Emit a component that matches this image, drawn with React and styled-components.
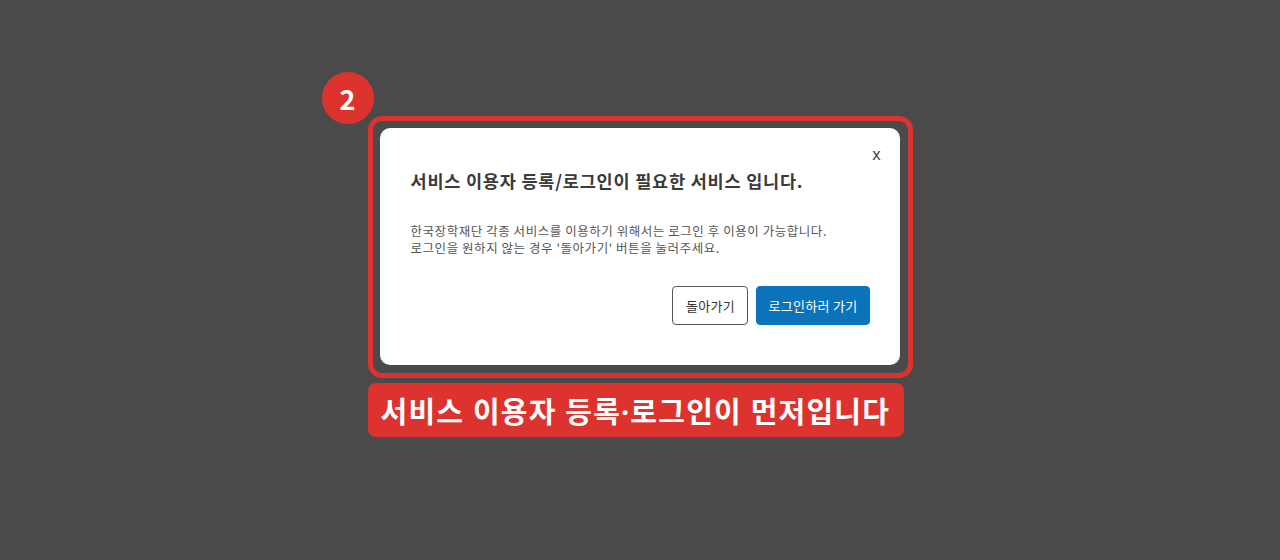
import React from 'react'
import styled, { createGlobalStyle } from 'styled-components'

const GlobalStyle = createGlobalStyle`
  html, body {
    margin: 0;
    padding: 0;
    background: #4a4a4a;
  }
  body {
    font-family: 'Noto Sans CJK KR', 'Noto Sans', sans-serif;
  }
`

const Page = styled.div`
  height: 560px;
  display: flex;
  flex-direction: column;
  align-items: center;
  padding-top: 116px;
  box-sizing: border-box;
`

const Group = styled.div`
  display: flex;
  flex-direction: column;
  align-items: flex-start;
  gap: 5px;
`

const Frame = styled.div`
  position: relative;
  border: 5px solid #dd332f;
  border-radius: 14px;
  padding: 7px 8px 8px 7px;
`

const StepBadge = styled.div`
  position: absolute;
  left: -51px;
  top: -49px;
  width: 52px;
  height: 52px;
  border-radius: 50%;
  background: #dd332f;
  color: #fff;
  font-size: 27px;
  font-weight: 700;
  display: flex;
  align-items: center;
  justify-content: center;
  line-height: 1;
`

const Modal = styled.div`
  position: relative;
  width: 520px;
  height: 237px;
  box-sizing: border-box;
  background: #fff;
  border-radius: 10px;
  padding: 41px 30px 0 31px;
  color: #333;
`

const CloseButton = styled.button`
  position: absolute;
  top: 15px;
  right: 15px;
  border: 0;
  background: none;
  padding: 0;
  width: 16px;
  height: 22px;
  font-family: 'Noto Sans', sans-serif;
  font-size: 16px;
  color: #444;
  cursor: pointer;
`

const Title = styled.h2`
  margin: 0;
  font-size: 17.5px;
  letter-spacing: 0.8px;
  line-height: 24px;
  font-weight: 700;
  color: #3a3a3a;
`

const Message = styled.p`
  margin: 29px 0 0;
  font-size: 12.5px;
  letter-spacing: 0.55px;
  line-height: 17px;
  color: #555;
`

const Actions = styled.div`
  display: flex;
  justify-content: flex-end;
  gap: 8px;
  margin-top: 30px;
`

const Button = styled.button`
  height: 39px;
  padding: 0 ${p => (p.$primary ? 11 : 12.5)}px;
  border-radius: 4px;
  font-family: inherit;
  font-size: 13px;
  letter-spacing: 0.3px;
  cursor: pointer;
  border: 1px solid ${p => (p.$primary ? '#0a73b9' : '#555')};
  background: ${p => (p.$primary ? '#0a73b9' : '#fff')};
  color: ${p => (p.$primary ? '#fff' : '#333')};
`

const Caption = styled.div`
  background: #dd332f;
  border-radius: 8px;
  height: 54px;
  padding: 0 14px 0 13px;
  display: flex;
  align-items: center;
  color: #fff;
  font-family: 'Noto Sans', 'Noto Sans CJK KR', sans-serif;
  font-size: 29px;
  letter-spacing: 1.2px;
  font-weight: 700;
  white-space: nowrap;
`

export default function App() {
  return (
    <Page>
      <GlobalStyle />
      <Group>
        <Frame>
          <StepBadge>2</StepBadge>
          <Modal>
            <CloseButton>x</CloseButton>
            <Title>서비스 이용자 등록/로그인이 필요한 서비스 입니다.</Title>
            <Message>
              한국장학재단 각종 서비스를 이용하기 위해서는 로그인 후 이용이 가능합니다.
              <br />
              로그인을 원하지 않는 경우 '돌아가기' 버튼을 눌러주세요.
            </Message>
            <Actions>
              <Button>돌아가기</Button>
              <Button $primary>로그인하러 가기</Button>
            </Actions>
          </Modal>
        </Frame>
        <Caption>서비스 이용자 등록·로그인이 먼저입니다</Caption>
      </Group>
    </Page>
  )
}
